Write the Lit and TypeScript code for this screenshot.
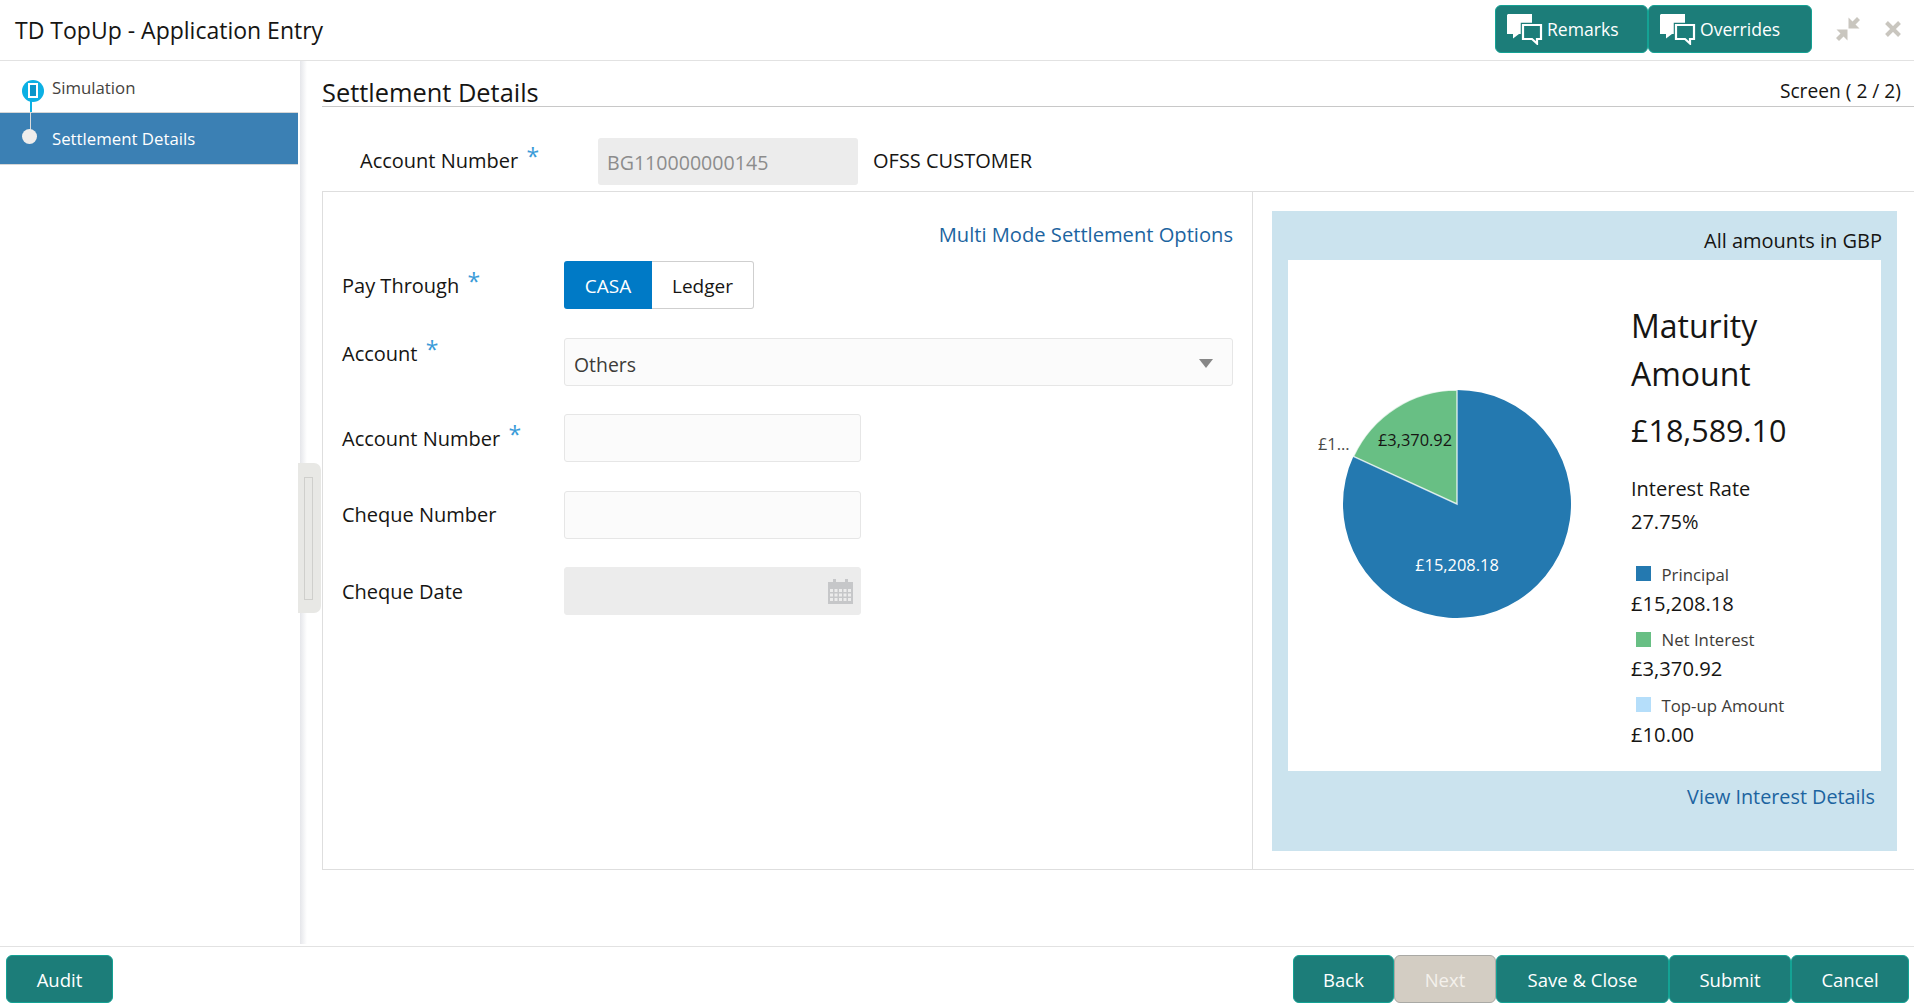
import { LitElement, html, css, svg } from "lit";
import { customElement } from "lit/decorators.js";

const chat = html`<svg class="chat" width="36" height="31" viewBox="0 0 36 31">
  <path d="M1 0H25V20H12L6 24.500V20H0V1Z" fill="#fff"/>
  <path d="M16 11H34V25H30V29.500L25 25H16Z" fill="#1c7d79" stroke="#1c7d79" stroke-width="4.500"/>
  <path d="M16 11H34V25H30V29.500L25 25H16Z" fill="#1c7d79" stroke="#fff" stroke-width="2.200"/>
</svg>`;

const compress = html`<svg width="26" height="26" viewBox="0 0 26 26" fill="#c9c6bf">
  <path id="a" d="M13.500 1.500V12.500H24.500L20.500 8.500L25 4L22 1L17.500 5.500Z"/>
  <path d="M13.500 1.500V12.500H24.500L20.500 8.500L25 4L22 1L17.500 5.500Z" transform="rotate(180 13 13)"/>
</svg>`;

const closeIcon = html`<svg width="16" height="16" viewBox="0 0 16 16"><path d="M1.500 1.500L14.500 14.500M14.500 1.500L1.500 14.500" stroke="#c9c6bf" stroke-width="4"/></svg>`;

const calendar = html`<svg class="cal" width="25" height="25" viewBox="0 0 25 25">
  <rect x="0" y="3" width="25" height="22" fill="#c6c7c9"/>
  <rect x="5" y="0" width="3" height="5" fill="#c6c7c9"/><rect x="17" y="0" width="3" height="5" fill="#c6c7c9"/>
  ${[10, 14.500, 19].map((y) => [2, 6.500, 11, 15.500, 20].map((x) => svg`<rect x="${x}" y="${y}" width="3" height="3" fill="#ececec"/>`))}
</svg>`;

@customElement("app-root")
export class AppRoot extends LitElement {
  static styles = css`
    :host { display: flex; flex-direction: column; width: 100%; height: 1004px; background: #fff; color: #161513;
      font-family: "Open Sans", "Noto Sans", sans-serif; font-size: 20px; overflow: hidden; }
    .header { flex: 0 0 60px; display: flex; align-items: center; padding: 0 13px 0 15px; }
    .title { font-size: 23px; flex: 1; }
    .btn { box-sizing: border-box; height: 48px; display: flex; align-items: center; justify-content: center; background: #1c7d79;
      color: #fff; border: 1px solid #14a294; border-radius: 6px; font-size: 18.500px; }
    .btn.off { background: #d3cdc3; border-color: #a9a9a5; color: #f4f1ec; }
    .btn.hd { justify-content: flex-start; padding-left: 11px; gap: 4px; margin-top: -2px; font-size: 17.600px; }
    .chat { flex: none; }
    .win { display: flex; align-items: center; margin: -2px 0 0 23px; gap: 24px; }
    .win svg { display: block; }
    .main { flex: 1; display: flex; border-top: 1px solid #e2e2e2; position: relative; min-height: 0; }
    .side { flex: 0 0 298px; margin-bottom: 2px; position: relative; }
    .step { box-sizing: border-box; height: 51px; padding: 15px 0 0 52px; font-size: 16.800px; color: #45423e; }
    .step.on { height: 53px; background: #3b80b4; color: #fff; border-top: 1px solid #d6d6d6; border-bottom: 1px solid #d6d6d6; padding-top: 14px; }
    .dot1 { position: absolute; left: 22px; top: 19px; width: 22px; height: 22px; border-radius: 50%; background: #0cb0e4; }
    .dot1::after { content: ""; position: absolute; left: 6px; top: 3px; width: 6px; height: 11px; border: 2px solid #fff; background: #0a95c9; }
    .ln1 { position: absolute; left: 30px; top: 40px; width: 2px; height: 11px; background: #0cb0e4; }
    .ln2 { position: absolute; left: 30px; top: 52px; width: 1px; height: 18px; background: #dcdcdc; }
    .dot2 { position: absolute; left: 22px; top: 68px; width: 15px; height: 15px; border-radius: 50%; background: #efedec; }
    .shade { flex: 0 0 24px; margin-bottom: 2px; background: linear-gradient(90deg, #fff 0, #fff 2px, #e5e6ea 2px, #fff 9px, #fff 100%); }
    .handle { position: absolute; left: 298px; top: 402px; box-sizing: border-box; width: 23px; height: 150px; background: #e8e8e5;
      border-radius: 0 7px 7px 0; display: flex; align-items: center; padding-left: 6px; }
    .handle i { display: block; box-sizing: border-box; width: 9px; height: 123px; border: 1px solid #cfcfcc; }
    .content { flex: 1; display: flex; flex-direction: column; min-width: 0; }
    .head { box-sizing: border-box; height: 46px; border-bottom: 1px solid #c8c8c8; display: flex; align-items: center; justify-content: space-between; padding: 16px 13px 0 0; }
    .head h1 { margin: 0; font-weight: 400; font-size: 25.400px; }
    .screen { font-size: 19.200px; margin-top: -2px; }
    .acc { height: 47px; margin-top: 31px; display: flex; align-items: center; padding-left: 38px; }
    .acc .lab { width: 238px; margin-top: -2px; }
    .star { color: #3a9bd8; font-size: 23px; position: relative; top: -3px; margin-left: 3px; line-height: 1; }
    .field { box-sizing: border-box; height: 47px; background: #ececec; border-radius: 3px; }
    .acc .field { width: 260px; padding: 11px 9px 0; color: #8c8c8c; font-size: 19.600px; }
    .acc .cust { margin-left: 15px; margin-top: -2px; }
    .panel { flex: 0 0 677px; margin-top: 6px; display: flex; border-top: 1px solid #dedede; border-bottom: 1px solid #dedede; }
    .left { box-sizing: border-box; width: 931px; border-left: 1px solid #dedede; border-right: 1px solid #dedede; padding: 28px 19px 0; }
    .link { color: #1c64a0; }
    .top-link { height: 28px; line-height: 28px; text-align: right; margin-bottom: 13px; font-size: 20.150px; }
    .rows { display: flex; flex-direction: column; gap: 28.500px; }
    .row { display: flex; height: 48px; align-items: center; }
    .row .lab { flex: 0 0 222px; }
    .row .lab.hi { margin-top: -16px; }
    .toggle { display: flex; height: 48px; width: 190px; font-size: 19px; }
    .toggle span { display: flex; align-items: center; justify-content: center; box-sizing: border-box; padding-top: 1px; }
    .toggle .a { width: 88px; background: #007ac6; color: #fff; border-radius: 3px 0 0 3px; }
    .toggle .b { flex: 1; border: 1px solid #cfcfcf; border-left: 0; border-radius: 0 3px 3px 0; }
    .input { box-sizing: border-box; width: 297px; height: 48px; background: #fbfbfb; border: 1px solid #e6e6e6; border-radius: 3px; }
    .select { flex: 1; display: flex; align-items: center; justify-content: space-between; padding: 5px 19px 0 9px; box-sizing: border-box; height: 48px;
      background: #fbfbfb; border: 1px solid #e6e6e6; border-radius: 3px; color: #3d3b38; font-size: 19.400px; }
    .arrow { width: 0; height: 0; border-left: 7px solid transparent; border-right: 7px solid transparent; border-top: 9px solid #878787; margin-top: -1px; }
    .input.dis { background: #ececec; border-color: #ececec; display: flex; align-items: center; justify-content: flex-end; padding-right: 7px; }
    .right { flex: 1; box-sizing: border-box; padding: 19px 17px 18px 19px; display: flex; }
    .blue { flex: 1; background: #cbe3ee; display: flex; flex-direction: column; }
    .amt { height: 49px; line-height: 60px; text-align: right; padding-right: 15px; }
    .card { margin: 0 16px; height: 511px; background: #fff; display: flex; }
    .pie { flex: 0 0 343px; display: block; }
    .pie text { font-family: "Open Sans", "Noto Sans", sans-serif; font-size: 16.400px; }
    .vals { padding-top: 42px; }
    .big { font-size: 32px; line-height: 48px; }
    .big.n { margin-top: 8px; font-size: 30.500px; }
    .ln { height: 33px; line-height: 33px; }
    .ir { margin-top: 18px; }
    .lg { height: 28px; line-height: 28px; display: flex; align-items: center; font-size: 16.800px; color: #3d3b38; margin-top: 8.500px; }
    .lg.first { margin-top: 22.500px; }
    .lg i { width: 15px; height: 15px; margin: -2px 10.500px 0 5px; display: block; }
    .val { height: 29px; line-height: 29px; font-size: 20.200px; }
    .view { height: 50px; line-height: 51px; text-align: right; padding-right: 22px; font-size: 19.800px; }
    .footer { box-sizing: border-box; flex: 0 0 58px; border-top: 1px solid #e2e2e2; display: flex; align-items: flex-start; padding: 8px 5px 0 6px; }
    .sp { flex: 1; }
  `;

  private pie() {
    const cx = 169, cy = 244, r = 114;
    const a = (3370.92 / 18589.1) * 2 * Math.PI;
    const x = cx - r * Math.sin(a), y = cy - r * Math.cos(a);
    return html`<svg class="pie" width="343" height="511" viewBox="0 0 343 511">
      <path d="M${cx} ${cy - r}A${r} ${r} 0 1 1 ${x} ${y}L${cx} ${cy}Z" fill="#2479b0"/>
      <path d="M${cx} ${cy}L${x} ${y}A${r} ${r} 0 0 1 ${cx} ${cy - r}Z" fill="#68bf84" stroke="#fff" stroke-opacity=".75" stroke-width="1.500"/>
      <text x="127" y="186" text-anchor="middle" fill="#161513">£3,370.92</text>
      <text x="169" y="311" text-anchor="middle" fill="#fff">£15,208.18</text>
      <text x="30" y="190" fill="#4a4a48">£1...</text>
    </svg>`;
  }

  private star() { return html`<span class="star">*</span>`; }

  render() {
    return html`
      <div class="header">
        <div class="title">TD TopUp - Application Entry</div>
        <div class="btn hd" style="width:153px">${chat}Remarks</div>
        <div class="btn hd" style="width:164px">${chat}Overrides</div>
        <div class="win">${compress}${closeIcon}</div>
      </div>
      <div class="main">
        <div class="side">
          <div class="step">Simulation</div>
          <div class="step on">Settlement Details</div>
          <span class="ln1"></span><span class="ln2"></span><span class="dot1"></span><span class="dot2"></span>
        </div>
        <div class="shade"></div>
        <div class="handle"><i></i></div>
        <div class="content">
          <div class="head"><h1>Settlement Details</h1><span class="screen">Screen ( 2 / 2)</span></div>
          <div class="acc">
            <span class="lab">Account Number ${this.star()}</span>
            <div class="field">BG110000000145</div>
            <span class="cust">OFSS CUSTOMER</span>
          </div>
          <div class="panel">
            <div class="left">
              <div class="top-link link">Multi Mode Settlement Options</div>
              <div class="rows">
                <div class="row"><span class="lab">Pay Through ${this.star()}</span>
                  <div class="toggle"><span class="a">CASA</span><span class="b">Ledger</span></div></div>
                <div class="row"><span class="lab hi">Account ${this.star()}</span>
                  <div class="select">Others<span class="arrow"></span></div></div>
                <div class="row"><span class="lab">Account Number ${this.star()}</span><div class="input"></div></div>
                <div class="row"><span class="lab">Cheque Number</span><div class="input"></div></div>
                <div class="row"><span class="lab">Cheque Date</span><div class="input dis">${calendar}</div></div>
              </div>
            </div>
            <div class="right">
              <div class="blue">
                <div class="amt">All amounts in GBP</div>
                <div class="card">
                  ${this.pie()}
                  <div class="vals">
                    <div class="big">Maturity</div>
                    <div class="big">Amount</div>
                    <div class="big n">£18,589.10</div>
                    <div class="ln ir">Interest Rate</div>
                    <div class="ln">27.75%</div>
                    <div class="lg first"><i style="background:#2479b0"></i>Principal</div>
                    <div class="val">£15,208.18</div>
                    <div class="lg"><i style="background:#68bf84"></i>Net Interest</div>
                    <div class="val">£3,370.92</div>
                    <div class="lg"><i style="background:#b5defa"></i>Top-up Amount</div>
                    <div class="val">£10.00</div>
                  </div>
                </div>
                <div class="view link">View Interest Details</div>
              </div>
            </div>
          </div>
        </div>
      </div>
      <div class="footer">
        <div class="btn" style="width:107px">Audit</div>
        <div class="sp"></div>
        <div class="btn" style="width:101px">Back</div>
        <div class="btn off" style="width:102px">Next</div>
        <div class="btn" style="width:173px">Save &amp; Close</div>
        <div class="btn" style="width:122px">Submit</div>
        <div class="btn" style="width:118px">Cancel</div>
      </div>
    `;
  }
}
